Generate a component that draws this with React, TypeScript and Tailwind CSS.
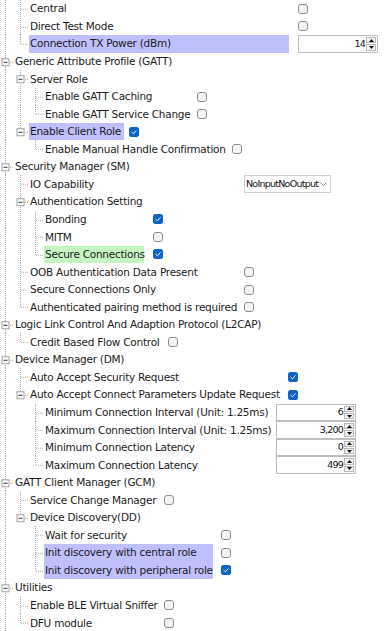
// BLE stack configuration tree: dotted guides, inline checkboxes, spin boxes.
type Ctrl =
  | { kind: "check"; on?: boolean }
  | { kind: "spin"; value: string }
  | { kind: "select"; value: string };

type Node = {
  label: string;
  hidden?: boolean;
  hl?: string;
  lw?: string;
  gap?: string;
  ctrl?: Ctrl;
  children?: Node[];
};

type Row = { node: Node; depth: number; guides: boolean[]; last: boolean };

const LAV = "bg-[#bfbffc]";

const TREE: Node[] = [
  {
    label: "",
    hidden: true,
    children: [
      { label: "Central", lw: "w-[260px]", gap: "ml-[9px]", ctrl: { kind: "check" } },
      { label: "Direct Test Mode", lw: "w-[260px]", gap: "ml-[9px]", ctrl: { kind: "check" } },
      {
        label: "Connection TX Power (dBm)",
        hl: LAV,
        lw: "w-[260px]",
        gap: "ml-[9px]",
        ctrl: { kind: "spin", value: "14" },
      },
    ],
  },
  {
    label: "Generic Attribute Profile (GATT)",
    children: [
      {
        label: "Server Role",
        children: [
          { label: "Enable GATT Caching", lw: "w-[145px]", gap: "ml-[8px]", ctrl: { kind: "check" } },
          { label: "Enable GATT Service Change", lw: "w-[145px]", gap: "ml-[8px]", ctrl: { kind: "check" } },
        ],
      },
      {
        label: "Enable Client Role",
        hl: LAV,
        lw: "w-[95px]",
        gap: "ml-[5px]",
        ctrl: { kind: "check", on: true },
        children: [
          {
            label: "Enable Manual Handle Confirmation",
            lw: "w-[180px]",
            gap: "ml-[8px]",
            ctrl: { kind: "check" },
          },
        ],
      },
    ],
  },
  {
    label: "Security Manager (SM)",
    children: [
      {
        label: "IO Capability",
        lw: "w-[207px]",
        gap: "ml-[8px]",
        ctrl: { kind: "select", value: "NoInputNoOutput" },
      },
      {
        label: "Authentication Setting",
        children: [
          { label: "Bonding", lw: "w-[100px]", gap: "ml-[9px]", ctrl: { kind: "check", on: true } },
          { label: "MITM", lw: "w-[100px]", gap: "ml-[9px]", ctrl: { kind: "check" } },
          {
            label: "Secure Connections",
            hl: "bg-[#c4f5c0]",
            lw: "w-[100px]",
            gap: "ml-[9px]",
            ctrl: { kind: "check", on: true },
          },
        ],
      },
      { label: "OOB Authentication Data Present", lw: "w-[207px]", gap: "ml-[8px]", ctrl: { kind: "check" } },
      { label: "Secure Connections Only", lw: "w-[207px]", gap: "ml-[8px]", ctrl: { kind: "check" } },
      {
        label: "Authenticated pairing method is required",
        lw: "w-[207px]",
        gap: "ml-[8px]",
        ctrl: { kind: "check" },
      },
    ],
  },
  {
    label: "Logic Link Control And Adaption Protocol (L2CAP)",
    children: [
      { label: "Credit Based Flow Control", lw: "w-[131px]", gap: "ml-[8px]", ctrl: { kind: "check" } },
    ],
  },
  {
    label: "Device Manager (DM)",
    children: [
      {
        label: "Auto Accept Security Request",
        lw: "w-[251px]",
        gap: "ml-[8px]",
        ctrl: { kind: "check", on: true },
      },
      {
        label: "Auto Accept Connect Parameters Update Request",
        lw: "w-[251px]",
        gap: "ml-[8px]",
        ctrl: { kind: "check", on: true },
        children: [
          {
            label: "Minimum Connection Interval (Unit: 1.25ms)",
            lw: "w-[224px]",
            gap: "ml-[8px]",
            ctrl: { kind: "spin", value: "6" },
          },
          {
            label: "Maximum Connection Interval (Unit: 1.25ms)",
            lw: "w-[224px]",
            gap: "ml-[8px]",
            ctrl: { kind: "spin", value: "3,200" },
          },
          {
            label: "Minimum Connection Latency",
            lw: "w-[224px]",
            gap: "ml-[8px]",
            ctrl: { kind: "spin", value: "0" },
          },
          {
            label: "Maximum Connection Latency",
            lw: "w-[224px]",
            gap: "ml-[8px]",
            ctrl: { kind: "spin", value: "499" },
          },
        ],
      },
    ],
  },
  {
    label: "GATT Client Manager (GCM)",
    children: [
      { label: "Service Change Manager", lw: "w-[127px]", gap: "ml-[8px]", ctrl: { kind: "check" } },
      {
        label: "Device Discovery(DD)",
        children: [
          { label: "Wait for security", lw: "w-[169px]", gap: "ml-[8px]", ctrl: { kind: "check" } },
          {
            label: "Init discovery with central role",
            hl: LAV,
            lw: "w-[169px]",
            gap: "ml-[8px]",
            ctrl: { kind: "check" },
          },
          {
            label: "Init discovery with peripheral role",
            hl: LAV,
            lw: "w-[169px]",
            gap: "ml-[8px]",
            ctrl: { kind: "check", on: true },
          },
        ],
      },
    ],
  },
  {
    label: "Utilities",
    children: [
      { label: "Enable BLE Virtual Sniffer", lw: "w-[127px]", gap: "ml-[8px]", ctrl: { kind: "check" } },
      { label: "DFU module", lw: "w-[127px]", gap: "ml-[8px]", ctrl: { kind: "check" } },
    ],
  },
];

function flatten(nodes: Node[], depth: number, guides: boolean[], out: Row[]) {
  nodes.forEach((node, i) => {
    // top level keeps going past the bottom of the view
    const last = depth === 0 ? false : i === nodes.length - 1;
    if (!node.hidden) out.push({ node, depth, guides, last });
    if (node.children) flatten(node.children, depth + 1, [...guides, !last], out);
  });
  return out;
}

const DOT = "#a8a8a8";

function Guide({ on }: { on: boolean }) {
  return (
    <svg className="h-full w-[15px] shrink-0" aria-hidden>
      {on && <line x1="5.5" y1="0" x2="5.5" y2="100%" stroke={DOT} strokeDasharray="1 1" />}
    </svg>
  );
}

function Connector({ last, open }: { last: boolean; open: boolean }) {
  return (
    <svg className="h-full w-[14px] shrink-0" aria-hidden>
      <line x1="5.5" y1="0" x2="5.5" y2={last ? "50%" : "100%"} stroke={DOT} strokeDasharray="1 1" />
      <svg y="50%" overflow="visible">
        <line x1="6" y1="0.5" x2="14" y2="0.5" stroke={DOT} strokeDasharray="1 1" />
        {open && (
          <>
            <rect x="2" y="-3" width="7" height="7" fill="#fff" stroke="#a0a0a0" />
            <line x1="3.5" y1="0.5" x2="7.5" y2="0.5" stroke="#333" />
          </>
        )}
      </svg>
    </svg>
  );
}

function Check({ on }: { on?: boolean }) {
  if (on)
    return (
      <svg width="10" height="10" viewBox="0 0 10 10" aria-hidden>
        <rect x="0" y="0" width="10" height="10" rx="2.5" fill="#0f62c6" />
        <path d="M2.6 5.1 4.4 6.8 7.5 3.4" fill="none" stroke="#fff" strokeWidth="0.9" />
      </svg>
    );
  return <div className="size-[10px] rounded-[3px] border border-[#8e8e8e] bg-[#f4f4f4]" />;
}

function SpinArrows() {
  return (
    <div className="flex w-[11px] shrink-0 flex-col gap-px py-px pr-px">
      <div className="flex flex-1 items-center justify-center border border-[#b9b9b9] bg-[#f1f1f1]">
        <svg width="5" height="3" viewBox="0 0 5 3" aria-hidden>
          <path d="M2.5 0 5 3H0z" fill="#111" />
        </svg>
      </div>
      <div className="flex flex-1 items-center justify-center border border-[#b9b9b9] bg-[#f1f1f1]">
        <svg width="5" height="3" viewBox="0 0 5 3" aria-hidden>
          <path d="M0 0h5L2.5 3z" fill="#111" />
        </svg>
      </div>
    </div>
  );
}

function Control({ c }: { c: Ctrl }) {
  if (c.kind === "check") return <Check on={c.on} />;
  if (c.kind === "spin")
    return (
      <div className="flex h-full w-[80px] border border-[#bdbdbd] bg-white">
        <div className="flex flex-1 items-center justify-end pr-[1px] text-[9.5px] tracking-[-0.8px] text-[#111]">
          {c.value}
        </div>
        <SpinArrows />
      </div>
    );
  return (
    <div className="flex h-full w-[87px] items-center border border-[#cfcfcf] bg-white pl-[1px] pr-[3px]">
      <span className="flex-1 whitespace-nowrap text-[9.5px] tracking-[-0.75px] text-[#111]">{c.value}</span>
      <svg width="7" height="4" viewBox="0 0 7 4" className="shrink-0" aria-hidden>
        <path d="M0.5 0.5 3.5 3.5 6.5 0.5" fill="none" stroke="#8a8a8a" strokeWidth="0.9" />
      </svg>
    </div>
  );
}

export default function App() {
  const rows = flatten(TREE, 0, [], []);
  return (
    <div className="h-[631px] w-[388px] overflow-hidden bg-white font-['DejaVu_Sans',sans-serif] text-[10.5px] tracking-[-0.25px] text-[#1c1c1c]">
      {rows.map(({ node, depth, guides, last }, i) => (
        <div key={i} className="flex h-[17.55px] items-stretch">
          {guides.map((g, j) => (
            <Guide key={j} on={g} />
          ))}
          <Connector last={last} open={!!node.children} />
          <div
            className={`flex shrink-0 items-center whitespace-nowrap pl-[1px] pt-px ${node.lw ?? ""} ${node.hl ?? ""}`}
          >
            {node.label}
          </div>
          {node.ctrl && (
            <div className={`flex shrink-0 items-center ${node.gap ?? ""}`}>
              <Control c={node.ctrl} />
            </div>
          )}
        </div>
      ))}
    </div>
  );
}
